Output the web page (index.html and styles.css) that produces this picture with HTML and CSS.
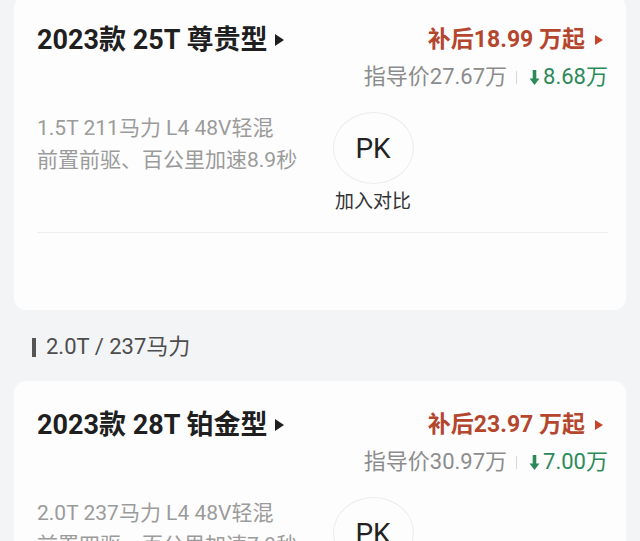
FILE: index.html
```html
<!DOCTYPE html>
<html lang="zh-CN">
<head>
    <meta charset="UTF-8">
    <meta name="viewport" content="width=device-width, initial-scale=1.0">
    <title>车型列表</title>
    <link rel="stylesheet" href="styles.css">
</head>
<body>

<div class="list">
    <div class="card">
        <div class="card-top">
            <div class="title">2023款 25T 尊贵型<span class="tri tri-dark"></span></div>
            <div class="prices">
                <div class="price">补后18.99 万起<span class="tri tri-red"></span></div>
                <div class="guide">指导价27.67万<span class="sep"></span><span class="drop"><svg class="arrow" viewBox="0 0 11 16"><path d="M3.6 0h3.8v9h3.4L5.5 16 0.2 9h3.4z"/></svg>8.68万</span></div>
            </div>
        </div>
        <div class="card-body">
            <div class="specs">
                <p>1.5T 211马力 L4 48V轻混</p>
                <p>前置前驱、百公里加速8.9秒</p>
            </div>
            <div class="pk">
                <div class="pk-circle">PK</div>
                <div class="pk-label">加入对比</div>
            </div>
        </div>
        <div class="card-foot"></div>
    </div>

    <div class="group-title"><span class="bar"></span>2.0T / 237马力</div>

    <div class="card">
        <div class="card-top">
            <div class="title">2023款 28T 铂金型<span class="tri tri-dark"></span></div>
            <div class="prices">
                <div class="price">补后23.97 万起<span class="tri tri-red"></span></div>
                <div class="guide">指导价30.97万<span class="sep"></span><span class="drop"><svg class="arrow" viewBox="0 0 11 16"><path d="M3.6 0h3.8v9h3.4L5.5 16 0.2 9h3.4z"/></svg>7.00万</span></div>
            </div>
        </div>
        <div class="card-body">
            <div class="specs">
                <p>2.0T 237马力 L4 48V轻混</p>
                <p>前置四驱、百公里加速7.9秒</p>
            </div>
            <div class="pk">
                <div class="pk-circle">PK</div>
                <div class="pk-label">加入对比</div>
            </div>
        </div>
        <div class="card-foot"></div>
    </div>
</div>

</body>
</html>
```

FILE: styles.css
```css
body {
    margin: 0;
    padding: 0;
    background-color: #f3f4f6;
    font-family: Roboto, "Noto Sans CJK SC", sans-serif;
    color: #1f1f1f;
}
.list {
    margin-top: -4px;
}
.card {
    background-color: #fdfdfd;
    margin: 0 14px;
    border-radius: 12px;
    padding: 26px 18px 0 23px;
}
.card-top {
    display: flex;
    justify-content: space-between;
    align-items: flex-start;
}
.title {
    font-size: 27px;
    font-weight: bold;
    line-height: 36px;
    display: flex;
    align-items: center;
}
.tri {
    display: inline-block;
    width: 0;
    height: 0;
    border-top: 6px solid transparent;
    border-bottom: 6px solid transparent;
}
.tri-dark {
    border-left: 9px solid #1f1f1f;
    margin-left: 8px;
}
.tri-red {
    border-top-width: 5px;
    border-bottom-width: 5px;
    border-left: 8px solid #c8452d;
    margin: 0 5px 0 10px;
}
.prices {
    text-align: right;
}
.price {
    font-size: 23px;
    font-weight: bold;
    line-height: 36px;
    color: #b4462e; /* subsidy red */
    display: flex;
    align-items: center;
    justify-content: flex-end;
}
.guide {
    margin-top: 3px;
    font-size: 22px;
    line-height: 32px;
    color: #8c8c8c;
    display: flex;
    align-items: center;
    justify-content: flex-end;
}
.sep {
    display: inline-block;
    width: 1px;
    height: 13px;
    background-color: #d6d6d6;
    margin: 0 12px 0 9px;
}
.drop {
    color: #2c8a5a; /* price drop green */
    display: inline-flex;
    align-items: center;
}
.arrow {
    width: 11px;
    height: 15px;
    fill: #2c8a5a;
    margin-right: 3px;
}
.card-body {
    display: flex;
    margin-top: 19px;
}
.specs {
    width: 296px;
    font-size: 21px;
    line-height: 32px;
    color: #9b9b9b;
}
.specs p {
    margin: 0;
    white-space: nowrap;
}
.pk {
    display: flex;
    flex-direction: column;
    align-items: center;
    width: 80px;
}
.pk-circle {
    width: 79px;
    height: 70px;
    border: 1px solid #ececec;
    border-radius: 50%;
    display: flex;
    align-items: center;
    justify-content: center;
    font-size: 28px;
    color: #222;
}
.pk-label {
    margin-top: 3px;
    font-size: 19px;
    line-height: 30px;
    color: #333;
}
.card-foot {
    margin-top: 15px;
    border-top: 1px solid #eeeeee;
    height: 77px;
}
.group-title {
    display: flex;
    align-items: center;
    padding: 25px 0 22px 32px;
    font-size: 22px;
    line-height: 24px;
    color: #4d4d4d;
}
.bar {
    display: inline-block;
    width: 4px;
    height: 19px;
    background-color: #555;
    margin-right: 10px;
}
```
